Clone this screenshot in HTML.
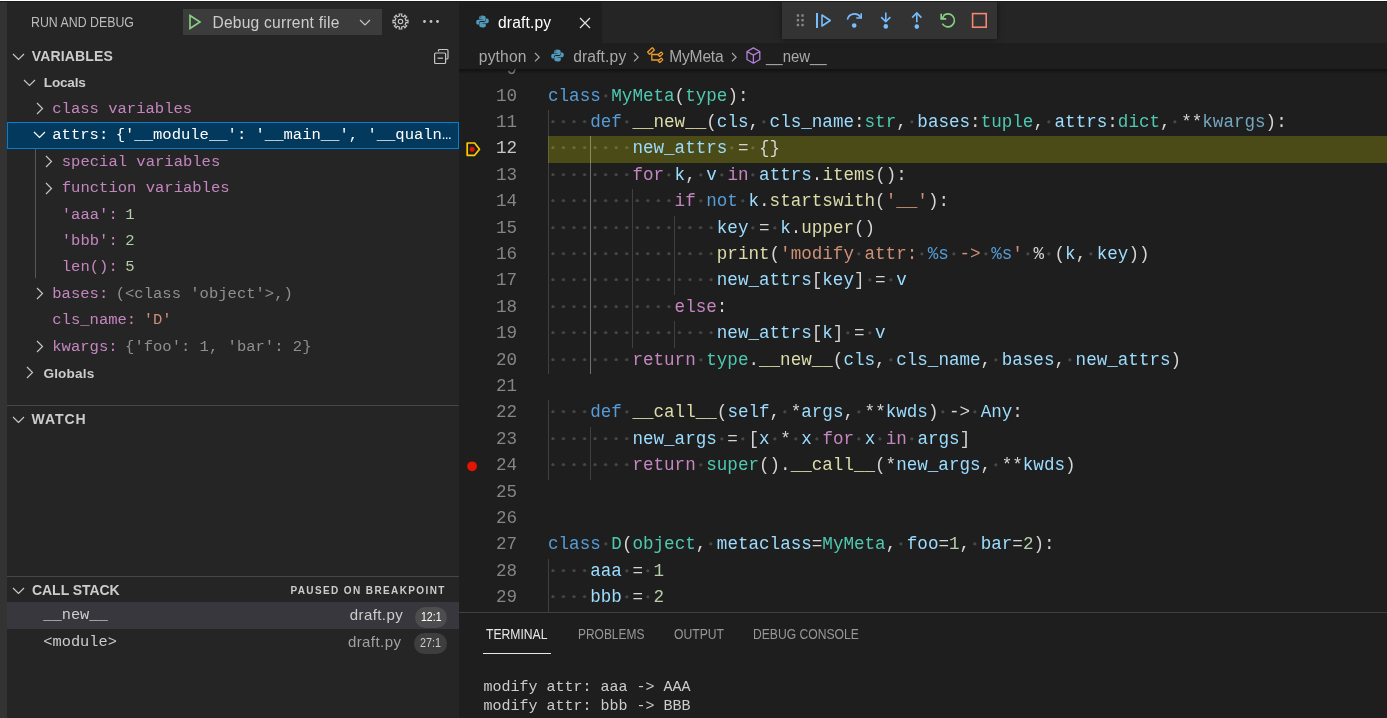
<!DOCTYPE html>
<html><head><meta charset="utf-8"><style>
html,body{margin:0;padding:0;}
body{width:1387px;height:718px;overflow:hidden;position:relative;background:#1e1e1e;font-family:"Liberation Sans", sans-serif;}
.t{position:absolute;white-space:pre;}
.r{position:absolute;}
.ln{position:absolute;left:0;width:58px;text-align:right;height:26.4px;line-height:26.4px;font-family:"Liberation Mono", monospace;font-size:17.58px;}
.cl{position:absolute;left:89px;height:26.4px;line-height:26.4px;font-family:"Liberation Mono", monospace;font-size:17.58px;white-space:pre;color:#d4d4d4;}
.ws{color:rgba(227,228,226,0.22);}
</style></head><body><div id="w" style="position:absolute;left:0;top:0;width:1387px;height:718px;will-change:transform;">
<div class="r" style="left:0px;top:0px;width:1387px;height:718px;background:#1e1e1e;"></div>
<div class="r" style="left:0px;top:0px;width:7px;height:718px;background:#333333;"></div>
<div class="r" style="left:7px;top:0px;width:452px;height:718px;background:#252526;"></div>
<div class="t" style="left:31.00px;top:16.00px;font-size:13.8px;line-height:13.8px;color:#bbbbbb;font-family:'Liberation Sans', sans-serif;font-weight:400;letter-spacing:0.000px;transform:scaleX(0.8955);transform-origin:0 0;">RUN AND DEBUG</div>
<div class="r" style="left:183px;top:9px;width:199px;height:26px;background:#3c3c3c;"></div>
<svg class="r" style="left:188px;top:14px;" width="14" height="16" viewBox="0 0 14 16"><path d="M2 1.5 L12 8 L2 14.5 Z" fill="none" stroke="#89d185" stroke-width="1.6" stroke-linejoin="miter"/></svg>
<div class="t" style="left:212.40px;top:15.00px;font-size:15.6px;line-height:15.6px;color:#cccccc;font-family:'Liberation Sans', sans-serif;font-weight:400;letter-spacing:0.228px;">Debug current file</div>
<svg class="r" style="left:359.3px;top:18.5px;" width="12" height="7" viewBox="0 0 12 7"><path d="M1 1 L6 6 L11 1" fill="none" stroke="#c5c5c5" stroke-width="1.2"/></svg>
<svg class="r" style="left:391.5px;top:12.7px;" width="17" height="17" viewBox="0 0 17 17"><g transform="translate(8.5,8.5)" fill="none" stroke="#c5c5c5" stroke-width="1.2"><path d="M7.48 -1.32 L7.48 1.32 L5.51 1.02 L4.62 3.17 L6.23 4.36 L4.36 6.23 L3.17 4.62 L1.02 5.51 L1.32 7.48 L-1.32 7.48 L-1.02 5.51 L-3.17 4.62 L-4.36 6.23 L-6.23 4.36 L-4.62 3.17 L-5.51 1.02 L-7.48 1.32 L-7.48 -1.32 L-5.51 -1.02 L-4.62 -3.17 L-6.23 -4.36 L-4.36 -6.23 L-3.17 -4.62 L-1.02 -5.51 L-1.32 -7.48 L1.32 -7.48 L1.02 -5.51 L3.17 -4.62 L4.36 -6.23 L6.23 -4.36 L4.62 -3.17 L5.51 -1.02 Z"/><circle r="2.2"/></g></svg>
<svg class="r" style="left:422px;top:19px;" width="18" height="5" viewBox="0 0 18 5"><circle cx="2.5" cy="2.5" r="1.4" fill="#c5c5c5"/><circle cx="9" cy="2.5" r="1.4" fill="#c5c5c5"/><circle cx="15.5" cy="2.5" r="1.4" fill="#c5c5c5"/></svg>
<svg class="r" style="left:12.0px;top:53.25px;" width="13.0" height="7.5" viewBox="0 0 13.0 7.5"><path d="M1 1 L6.5 6.5 L12.0 1" fill="none" stroke="#c5c5c5" stroke-width="1.2"/></svg>
<div class="t" style="left:31.80px;top:49.00px;font-size:14px;line-height:14px;color:#cccccc;font-family:'Liberation Sans', sans-serif;font-weight:700;letter-spacing:0.143px;">VARIABLES</div>
<svg class="r" style="left:433px;top:48px;" width="17" height="17" viewBox="0 0 17 17"><g fill="none" stroke="#c5c5c5" stroke-width="1.2"><path d="M5.5 3.5 V2.5 Q5.5 1.5 6.5 1.5 H14 Q15 1.5 15 2.5 V10 Q15 11 14 11 H13"/><rect x="1.6" y="5" width="11" height="10.5" rx="1"/><path d="M4.5 10.2 H10"/></g></svg>
<svg class="r" style="left:23.0px;top:79.25px;" width="13.0" height="7.5" viewBox="0 0 13.0 7.5"><path d="M1 1 L6.5 6.5 L12.0 1" fill="none" stroke="#c5c5c5" stroke-width="1.2"/></svg>
<div class="t" style="left:43.80px;top:76.00px;font-size:13.6px;line-height:13.6px;color:#cccccc;font-family:'Liberation Sans', sans-serif;font-weight:700;letter-spacing:-0.216px;">Locals</div>
<svg class="r" style="left:36.25px;top:102.0px;" width="7.5" height="13.0" viewBox="0 0 7.5 13.0"><path d="M1 1 L6.5 6.5 L1 12.0" fill="none" stroke="#c5c5c5" stroke-width="1.2"/></svg>
<div class="t" style="left:52.30px;top:102.00px;font-size:15.54px;line-height:15.54px;color:#c586c0;font-family:'Liberation Mono', monospace;font-weight:400;letter-spacing:0.000px;">class variables</div>
<div class="r" style="left:7px;top:122px;width:452px;height:27px;background:#04395e;box-sizing:border-box;border:1px solid #007fd4;"></div>
<svg class="r" style="left:33.0px;top:131.25px;" width="13.0" height="7.5" viewBox="0 0 13.0 7.5"><path d="M1 1 L6.5 6.5 L12.0 1" fill="none" stroke="#ffffff" stroke-width="1.2"/></svg>
<div class="t" style="left:52.30px;top:128.00px;font-size:15.54px;line-height:15.54px;color:#ffffff;font-family:'Liberation Mono', monospace;font-weight:400;letter-spacing:0.000px;">attrs:</div>
<div class="t" style="left:115.74px;top:128.00px;font-size:15.54px;line-height:15.54px;color:#ffffff;font-family:'Liberation Mono', monospace;font-weight:400;letter-spacing:0.000px;">{'__module__': '__main__', '__qualn…</div>
<div class="r" style="left:35px;top:149px;width:1px;height:129px;background:#585858;"></div>
<svg class="r" style="left:45.25px;top:154.5px;" width="7.5" height="13.0" viewBox="0 0 7.5 13.0"><path d="M1 1 L6.5 6.5 L1 12.0" fill="none" stroke="#c5c5c5" stroke-width="1.2"/></svg>
<div class="t" style="left:61.80px;top:155.00px;font-size:15.54px;line-height:15.54px;color:#c586c0;font-family:'Liberation Mono', monospace;font-weight:400;letter-spacing:0.000px;">special variables</div>
<svg class="r" style="left:45.25px;top:181.9px;" width="7.5" height="13.0" viewBox="0 0 7.5 13.0"><path d="M1 1 L6.5 6.5 L1 12.0" fill="none" stroke="#c5c5c5" stroke-width="1.2"/></svg>
<div class="t" style="left:61.80px;top:181.00px;font-size:15.54px;line-height:15.54px;color:#c586c0;font-family:'Liberation Mono', monospace;font-weight:400;letter-spacing:0.000px;">function variables</div>
<div class="t" style="left:61.80px;top:208.00px;font-size:15.54px;line-height:15.54px;color:#c586c0;font-family:'Liberation Mono', monospace;font-weight:400;letter-spacing:0.000px;">'aaa':</div>
<div class="t" style="left:125.24px;top:208.00px;font-size:15.54px;line-height:15.54px;color:#b5cea8;font-family:'Liberation Mono', monospace;font-weight:400;letter-spacing:0.000px;">1</div>
<div class="t" style="left:61.80px;top:234.00px;font-size:15.54px;line-height:15.54px;color:#c586c0;font-family:'Liberation Mono', monospace;font-weight:400;letter-spacing:0.000px;">'bbb':</div>
<div class="t" style="left:125.24px;top:234.00px;font-size:15.54px;line-height:15.54px;color:#b5cea8;font-family:'Liberation Mono', monospace;font-weight:400;letter-spacing:0.000px;">2</div>
<div class="t" style="left:61.80px;top:260.00px;font-size:15.54px;line-height:15.54px;color:#c586c0;font-family:'Liberation Mono', monospace;font-weight:400;letter-spacing:0.000px;">len():</div>
<div class="t" style="left:125.24px;top:260.00px;font-size:15.54px;line-height:15.54px;color:#b5cea8;font-family:'Liberation Mono', monospace;font-weight:400;letter-spacing:0.000px;">5</div>
<svg class="r" style="left:36.25px;top:286.5px;" width="7.5" height="13.0" viewBox="0 0 7.5 13.0"><path d="M1 1 L6.5 6.5 L1 12.0" fill="none" stroke="#c5c5c5" stroke-width="1.2"/></svg>
<div class="t" style="left:52.30px;top:287.00px;font-size:15.54px;line-height:15.54px;color:#c586c0;font-family:'Liberation Mono', monospace;font-weight:400;letter-spacing:0.000px;">bases:</div>
<div class="t" style="left:115.74px;top:287.00px;font-size:15.54px;line-height:15.54px;color:#8f8f90;font-family:'Liberation Mono', monospace;font-weight:400;letter-spacing:0.000px;">(&lt;class 'object'&gt;,)</div>
<div class="t" style="left:52.30px;top:313.00px;font-size:15.54px;line-height:15.54px;color:#c586c0;font-family:'Liberation Mono', monospace;font-weight:400;letter-spacing:0.000px;">cls_name:</div>
<div class="t" style="left:143.72px;top:313.00px;font-size:15.54px;line-height:15.54px;color:#ce9178;font-family:'Liberation Mono', monospace;font-weight:400;letter-spacing:0.000px;">'D'</div>
<svg class="r" style="left:36.25px;top:339.5px;" width="7.5" height="13.0" viewBox="0 0 7.5 13.0"><path d="M1 1 L6.5 6.5 L1 12.0" fill="none" stroke="#c5c5c5" stroke-width="1.2"/></svg>
<div class="t" style="left:52.30px;top:340.00px;font-size:15.54px;line-height:15.54px;color:#c586c0;font-family:'Liberation Mono', monospace;font-weight:400;letter-spacing:0.000px;">kwargs:</div>
<div class="t" style="left:125.07px;top:340.00px;font-size:15.54px;line-height:15.54px;color:#8f8f90;font-family:'Liberation Mono', monospace;font-weight:400;letter-spacing:0.000px;">{'foo': 1, 'bar': 2}</div>
<svg class="r" style="left:26.25px;top:365.5px;" width="7.5" height="13.0" viewBox="0 0 7.5 13.0"><path d="M1 1 L6.5 6.5 L1 12.0" fill="none" stroke="#c5c5c5" stroke-width="1.2"/></svg>
<div class="t" style="left:43.40px;top:367.00px;font-size:13.6px;line-height:13.6px;color:#cccccc;font-family:'Liberation Sans', sans-serif;font-weight:700;letter-spacing:0.188px;">Globals</div>
<div class="r" style="left:7px;top:405px;width:452px;height:1px;background:#464646;"></div>
<svg class="r" style="left:12.0px;top:415.75px;" width="13.0" height="7.5" viewBox="0 0 13.0 7.5"><path d="M1 1 L6.5 6.5 L12.0 1" fill="none" stroke="#c5c5c5" stroke-width="1.2"/></svg>
<div class="t" style="left:31.60px;top:412.00px;font-size:14px;line-height:14px;color:#cccccc;font-family:'Liberation Sans', sans-serif;font-weight:700;letter-spacing:0.928px;">WATCH</div>
<div class="r" style="left:7px;top:576px;width:452px;height:1px;background:#464646;"></div>
<svg class="r" style="left:12.0px;top:586.75px;" width="13.0" height="7.5" viewBox="0 0 13.0 7.5"><path d="M1 1 L6.5 6.5 L12.0 1" fill="none" stroke="#c5c5c5" stroke-width="1.2"/></svg>
<div class="t" style="left:32.00px;top:583.00px;font-size:14px;line-height:14px;color:#cccccc;font-family:'Liberation Sans', sans-serif;font-weight:700;letter-spacing:-0.049px;">CALL STACK</div>
<div class="t" style="left:290.40px;top:586.00px;font-size:10.0px;line-height:10.0px;color:#cccccc;font-family:'Liberation Sans', sans-serif;font-weight:700;letter-spacing:1.389px;">PAUSED ON BREAKPOINT</div>
<div class="r" style="left:7px;top:602px;width:452px;height:27px;background:#37373d;"></div>
<div class="t" style="left:43.30px;top:608.00px;font-size:15.33px;line-height:15.33px;color:#cccccc;font-family:'Liberation Mono', monospace;font-weight:400;letter-spacing:0.000px;">__new__</div>
<div class="t" style="left:349.70px;top:607.00px;font-size:15.0px;line-height:15.0px;color:#cccccc;font-family:'Liberation Sans', sans-serif;font-weight:400;letter-spacing:0.426px;">draft.py</div>
<div class="r" style="left:415px;top:607px;width:32px;height:21px;background:#4d4d4d;border-radius:11px;"></div>
<div class="t" style="left:420.50px;top:610.00px;font-size:13px;line-height:13px;color:#ffffff;font-family:'Liberation Sans', sans-serif;font-weight:400;letter-spacing:0.000px;transform:scaleX(0.8103);transform-origin:0 0;">12:1</div>
<div class="t" style="left:43.30px;top:635.00px;font-size:15.33px;line-height:15.33px;color:#cccccc;font-family:'Liberation Mono', monospace;font-weight:400;letter-spacing:0.000px;">&lt;module&gt;</div>
<div class="t" style="left:347.90px;top:634.00px;font-size:15.0px;line-height:15.0px;color:#a0a0a0;font-family:'Liberation Sans', sans-serif;font-weight:400;letter-spacing:0.426px;">draft.py</div>
<div class="r" style="left:414px;top:633px;width:33px;height:21px;background:#3e3e3e;border-radius:11px;"></div>
<div class="t" style="left:419.50px;top:636.00px;font-size:13px;line-height:13px;color:#cccccc;font-family:'Liberation Sans', sans-serif;font-weight:400;letter-spacing:0.000px;transform:scaleX(0.8301);transform-origin:0 0;">27:1</div>
<div class="r" style="left:459px;top:0px;width:928px;height:43px;background:#252526;"></div>
<div class="r" style="left:459px;top:2px;width:143px;height:41px;background:#1e1e1e;"></div>
<svg class="r" style="left:475.8px;top:15px;" width="13" height="13" viewBox="0 0 13 13"><g transform="scale(1.0)"><path d="M6.4 0.5 C4.2 0.5 3.2 1.3 3.2 2.6 V4.2 H6.6 V4.8 H1.9 C0.7 4.8 0.2 5.9 0.2 7.2 C0.2 8.6 0.8 9.6 1.9 9.6 H3 V8 C3 6.9 3.9 6.1 5 6.1 H8 C8.9 6.1 9.7 5.4 9.7 4.5 V2.5 C9.7 1.3 8.6 0.5 6.4 0.5 Z M4.8 1.5 A0.55 0.55 0 1 1 4.79 1.5 Z" fill="#519aba"/><path d="M6.6 12.5 C8.8 12.5 9.8 11.7 9.8 10.4 V8.8 H6.4 V8.2 H11.1 C12.3 8.2 12.8 7.1 12.8 5.8 C12.8 4.4 12.2 3.4 11.1 3.4 H10 V5 C10 6.1 9.1 6.9 8 6.9 H5 C4.1 6.9 3.3 7.6 3.3 8.5 V10.5 C3.3 11.7 4.4 12.5 6.6 12.5 Z" fill="#519aba"/></g></svg>
<div class="t" style="left:498.00px;top:15.00px;font-size:15.6px;line-height:15.6px;color:#ffffff;font-family:'Liberation Sans', sans-serif;font-weight:400;letter-spacing:0.140px;">draft.py</div>
<svg class="r" style="left:579px;top:16.5px;" width="12" height="12" viewBox="0 0 12 12"><path d="M1 1 L11 11 M11 1 L1 11" stroke="#e0e0e0" stroke-width="1.3"/></svg>
<div class="r" style="left:459px;top:43px;width:928px;height:26px;background:#1e1e1e;"></div>
<div class="t" style="left:478.80px;top:49.00px;font-size:15.6px;line-height:15.6px;color:#a9a9a9;font-family:'Liberation Sans', sans-serif;font-weight:400;letter-spacing:0.173px;">python</div>
<svg class="r" style="left:534.1px;top:52.3px;" width="6.2" height="10.4" viewBox="0 0 6.2 10.4"><path d="M1 1 L5.2 5.2 L1 9.4" fill="none" stroke="#a9a9a9" stroke-width="1.2"/></svg>
<svg class="r" style="left:550.8px;top:49px;" width="13" height="13" viewBox="0 0 13 13"><g transform="scale(1.0)"><path d="M6.4 0.5 C4.2 0.5 3.2 1.3 3.2 2.6 V4.2 H6.6 V4.8 H1.9 C0.7 4.8 0.2 5.9 0.2 7.2 C0.2 8.6 0.8 9.6 1.9 9.6 H3 V8 C3 6.9 3.9 6.1 5 6.1 H8 C8.9 6.1 9.7 5.4 9.7 4.5 V2.5 C9.7 1.3 8.6 0.5 6.4 0.5 Z M4.8 1.5 A0.55 0.55 0 1 1 4.79 1.5 Z" fill="#519aba"/><path d="M6.6 12.5 C8.8 12.5 9.8 11.7 9.8 10.4 V8.8 H6.4 V8.2 H11.1 C12.3 8.2 12.8 7.1 12.8 5.8 C12.8 4.4 12.2 3.4 11.1 3.4 H10 V5 C10 6.1 9.1 6.9 8 6.9 H5 C4.1 6.9 3.3 7.6 3.3 8.5 V10.5 C3.3 11.7 4.4 12.5 6.6 12.5 Z" fill="#519aba"/></g></svg>
<div class="t" style="left:573.20px;top:49.00px;font-size:15.6px;line-height:15.6px;color:#a9a9a9;font-family:'Liberation Sans', sans-serif;font-weight:400;letter-spacing:0.140px;">draft.py</div>
<svg class="r" style="left:633.3px;top:52.3px;" width="6.2" height="10.4" viewBox="0 0 6.2 10.4"><path d="M1 1 L5.2 5.2 L1 9.4" fill="none" stroke="#a9a9a9" stroke-width="1.2"/></svg>
<svg class="r" style="left:646px;top:47px;" width="18" height="18" viewBox="0 0 18 18"><g fill="none" stroke="#ee9d28" stroke-width="1.3"><rect x="1.75" y="2.4" width="6.5" height="3.2" rx="0.5" transform="rotate(-42 5 4)"/><rect x="12.4" y="6.1" width="4.2" height="2.4" rx="0.5" transform="rotate(-42 14.5 7.3)"/><rect x="12.4" y="12.1" width="4.2" height="2.4" rx="0.5" transform="rotate(-42 14.5 13.3)"/><path d="M5.8 6.6 V13 H12.8 M5.8 7.5 H12.8"/></g></svg>
<div class="t" style="left:669.20px;top:49.00px;font-size:15.6px;line-height:15.6px;color:#a9a9a9;font-family:'Liberation Sans', sans-serif;font-weight:400;letter-spacing:-0.195px;">MyMeta</div>
<svg class="r" style="left:731.3px;top:52.3px;" width="6.2" height="10.4" viewBox="0 0 6.2 10.4"><path d="M1 1 L5.2 5.2 L1 9.4" fill="none" stroke="#a9a9a9" stroke-width="1.2"/></svg>
<svg class="r" style="left:745px;top:46.5px;" width="17" height="18" viewBox="0 0 17 18"><g fill="none" stroke="#b180d7" stroke-width="1.3" stroke-linejoin="round"><path d="M8.4 0.9 L14.8 4.5 V12.5 L8.4 16.2 L2 12.5 V4.5 Z M2 4.5 L8.4 8.1 L14.8 4.5 M8.4 8.1 V16.2"/></g></svg>
<div class="t" style="left:766.00px;top:49.00px;font-size:15.6px;line-height:15.6px;color:#a9a9a9;font-family:'Liberation Sans', sans-serif;font-weight:400;letter-spacing:0.000px;transform:scaleX(0.9587);transform-origin:0 0;">__new__</div>
<div class="r" style="left:782px;top:2px;width:215px;height:37px;background:#333333;box-shadow:0 0 6px rgba(0,0,0,0.55);"></div>
<svg class="r" style="left:796px;top:14px;" width="10" height="14" viewBox="0 0 10 14"><rect x="0.8" y="0.3" width="2.3" height="2.4" fill="#8a8a8a"/><rect x="0.8" y="5.0" width="2.3" height="2.4" fill="#8a8a8a"/><rect x="0.8" y="9.8" width="2.3" height="2.4" fill="#8a8a8a"/><rect x="5.4" y="0.3" width="2.3" height="2.4" fill="#8a8a8a"/><rect x="5.4" y="5.0" width="2.3" height="2.4" fill="#8a8a8a"/><rect x="5.4" y="9.8" width="2.3" height="2.4" fill="#8a8a8a"/></svg>
<svg class="r" style="left:814px;top:11px;" width="20" height="19" viewBox="0 0 20 19"><path d="M3 2 V17" stroke="#75beff" stroke-width="2"/><path d="M8 4 L16.2 9.5 L8 15 Z" fill="none" stroke="#75beff" stroke-width="1.6" stroke-linejoin="round"/></svg>
<svg class="r" style="left:845px;top:11px;" width="19" height="18" viewBox="0 0 19 18"><path d="M2.5 8.7 A7 6.5 0 0 1 15.5 6.2" fill="none" stroke="#75beff" stroke-width="1.6"/><path d="M16.2 2.2 V7 H11.3" fill="none" stroke="#75beff" stroke-width="1.6"/><circle cx="9.2" cy="14.5" r="2.3" fill="#75beff"/></svg>
<svg class="r" style="left:878px;top:10px;" width="16" height="20" viewBox="0 0 16 20"><path d="M7.8 2.5 V11.6" stroke="#75beff" stroke-width="1.6"/><path d="M3.2 7.2 L7.8 11.6 L12.4 7.2" fill="none" stroke="#75beff" stroke-width="1.6"/><circle cx="7.8" cy="16.4" r="2.3" fill="#75beff"/></svg>
<svg class="r" style="left:909px;top:10px;" width="16" height="20" viewBox="0 0 16 20"><path d="M7.8 3.1 V12.3" stroke="#75beff" stroke-width="1.6"/><path d="M3.2 7.6 L7.8 3 L12.4 7.6" fill="none" stroke="#75beff" stroke-width="1.6"/><circle cx="7.8" cy="16.6" r="2.3" fill="#75beff"/></svg>
<svg class="r" style="left:938px;top:11px;" width="19" height="19" viewBox="0 0 19 19"><path d="M4.3 12.7 A6.5 6.5 0 1 0 5.4 4.7" fill="none" stroke="#89d185" stroke-width="1.6"/><path d="M3.2 2.8 V7.9 H8.2 M3.6 7.5 L6 5.1" fill="none" stroke="#89d185" stroke-width="1.7"/></svg>
<svg class="r" style="left:970px;top:11px;" width="19" height="19" viewBox="0 0 19 19"><rect x="2.6" y="2.6" width="13.6" height="13.6" fill="none" stroke="#f48771" stroke-width="1.6"/></svg>
<div class="r" style="left:459px;top:69px;width:928px;height:543px;overflow:hidden;">
<div class="r" style="left:89px;top:41.0px;width:1px;height:264.0px;background:#404040;"></div>
<div class="r" style="left:131px;top:67.39999999999998px;width:1px;height:237.6px;background:#707070;"></div>
<div class="r" style="left:173px;top:120.19999999999999px;width:1px;height:158.39999999999998px;background:#404040;"></div>
<div class="r" style="left:215px;top:146.6px;width:1px;height:79.19999999999999px;background:#404040;"></div>
<div class="r" style="left:215px;top:252.2px;width:1px;height:26.4px;background:#404040;"></div>
<div class="r" style="left:89px;top:331.4px;width:1px;height:79.19999999999999px;background:#404040;"></div>
<div class="r" style="left:131px;top:357.79999999999995px;width:1px;height:52.8px;background:#404040;"></div>
<div class="r" style="left:89px;top:489.79999999999995px;width:1px;height:52.8px;background:#404040;"></div>
<div class="r" style="left:141.75px;top:14.60px;width:10.55px;height:26.4px;background:radial-gradient(circle at 4.875px 11.9px, #474747 1.2px, transparent 1.9px) 0 0/10.55px 26.4px repeat-x;"></div>
<div class="r" style="left:89.00px;top:41.00px;width:42.20px;height:26.4px;background:radial-gradient(circle at 4.875px 11.9px, #474747 1.2px, transparent 1.9px) 0 0/10.55px 26.4px repeat-x;"></div>
<div class="r" style="left:162.85px;top:41.00px;width:10.55px;height:26.4px;background:radial-gradient(circle at 4.875px 11.9px, #474747 1.2px, transparent 1.9px) 0 0/10.55px 26.4px repeat-x;"></div>
<div class="r" style="left:300.00px;top:41.00px;width:10.55px;height:26.4px;background:radial-gradient(circle at 4.875px 11.9px, #474747 1.2px, transparent 1.9px) 0 0/10.55px 26.4px repeat-x;"></div>
<div class="r" style="left:447.70px;top:41.00px;width:10.55px;height:26.4px;background:radial-gradient(circle at 4.875px 11.9px, #474747 1.2px, transparent 1.9px) 0 0/10.55px 26.4px repeat-x;"></div>
<div class="r" style="left:584.85px;top:41.00px;width:10.55px;height:26.4px;background:radial-gradient(circle at 4.875px 11.9px, #474747 1.2px, transparent 1.9px) 0 0/10.55px 26.4px repeat-x;"></div>
<div class="r" style="left:711.45px;top:41.00px;width:10.55px;height:26.4px;background:radial-gradient(circle at 4.875px 11.9px, #474747 1.2px, transparent 1.9px) 0 0/10.55px 26.4px repeat-x;"></div>
<div class="r" style="left:89.00px;top:67.40px;width:84.40px;height:26.4px;background:radial-gradient(circle at 4.875px 11.9px, #474747 1.2px, transparent 1.9px) 0 0/10.55px 26.4px repeat-x;"></div>
<div class="r" style="left:268.35px;top:67.40px;width:10.55px;height:26.4px;background:radial-gradient(circle at 4.875px 11.9px, #474747 1.2px, transparent 1.9px) 0 0/10.55px 26.4px repeat-x;"></div>
<div class="r" style="left:289.45px;top:67.40px;width:10.55px;height:26.4px;background:radial-gradient(circle at 4.875px 11.9px, #474747 1.2px, transparent 1.9px) 0 0/10.55px 26.4px repeat-x;"></div>
<div class="r" style="left:89.00px;top:93.80px;width:84.40px;height:26.4px;background:radial-gradient(circle at 4.875px 11.9px, #474747 1.2px, transparent 1.9px) 0 0/10.55px 26.4px repeat-x;"></div>
<div class="r" style="left:205.05px;top:93.80px;width:10.55px;height:26.4px;background:radial-gradient(circle at 4.875px 11.9px, #474747 1.2px, transparent 1.9px) 0 0/10.55px 26.4px repeat-x;"></div>
<div class="r" style="left:236.70px;top:93.80px;width:10.55px;height:26.4px;background:radial-gradient(circle at 4.875px 11.9px, #474747 1.2px, transparent 1.9px) 0 0/10.55px 26.4px repeat-x;"></div>
<div class="r" style="left:257.80px;top:93.80px;width:10.55px;height:26.4px;background:radial-gradient(circle at 4.875px 11.9px, #474747 1.2px, transparent 1.9px) 0 0/10.55px 26.4px repeat-x;"></div>
<div class="r" style="left:289.45px;top:93.80px;width:10.55px;height:26.4px;background:radial-gradient(circle at 4.875px 11.9px, #474747 1.2px, transparent 1.9px) 0 0/10.55px 26.4px repeat-x;"></div>
<div class="r" style="left:89.00px;top:120.20px;width:126.60px;height:26.4px;background:radial-gradient(circle at 4.875px 11.9px, #474747 1.2px, transparent 1.9px) 0 0/10.55px 26.4px repeat-x;"></div>
<div class="r" style="left:236.70px;top:120.20px;width:10.55px;height:26.4px;background:radial-gradient(circle at 4.875px 11.9px, #474747 1.2px, transparent 1.9px) 0 0/10.55px 26.4px repeat-x;"></div>
<div class="r" style="left:278.90px;top:120.20px;width:10.55px;height:26.4px;background:radial-gradient(circle at 4.875px 11.9px, #474747 1.2px, transparent 1.9px) 0 0/10.55px 26.4px repeat-x;"></div>
<div class="r" style="left:89.00px;top:146.60px;width:168.80px;height:26.4px;background:radial-gradient(circle at 4.875px 11.9px, #474747 1.2px, transparent 1.9px) 0 0/10.55px 26.4px repeat-x;"></div>
<div class="r" style="left:289.45px;top:146.60px;width:10.55px;height:26.4px;background:radial-gradient(circle at 4.875px 11.9px, #474747 1.2px, transparent 1.9px) 0 0/10.55px 26.4px repeat-x;"></div>
<div class="r" style="left:310.55px;top:146.60px;width:10.55px;height:26.4px;background:radial-gradient(circle at 4.875px 11.9px, #474747 1.2px, transparent 1.9px) 0 0/10.55px 26.4px repeat-x;"></div>
<div class="r" style="left:89.00px;top:173.00px;width:168.80px;height:26.4px;background:radial-gradient(circle at 4.875px 11.9px, #474747 1.2px, transparent 1.9px) 0 0/10.55px 26.4px repeat-x;"></div>
<div class="r" style="left:394.95px;top:173.00px;width:10.55px;height:26.4px;background:radial-gradient(circle at 4.875px 11.9px, #474747 1.2px, transparent 1.9px) 0 0/10.55px 26.4px repeat-x;"></div>
<div class="r" style="left:458.25px;top:173.00px;width:10.55px;height:26.4px;background:radial-gradient(circle at 4.875px 11.9px, #474747 1.2px, transparent 1.9px) 0 0/10.55px 26.4px repeat-x;"></div>
<div class="r" style="left:489.90px;top:173.00px;width:10.55px;height:26.4px;background:radial-gradient(circle at 4.875px 11.9px, #474747 1.2px, transparent 1.9px) 0 0/10.55px 26.4px repeat-x;"></div>
<div class="r" style="left:521.55px;top:173.00px;width:10.55px;height:26.4px;background:radial-gradient(circle at 4.875px 11.9px, #474747 1.2px, transparent 1.9px) 0 0/10.55px 26.4px repeat-x;"></div>
<div class="r" style="left:563.75px;top:173.00px;width:10.55px;height:26.4px;background:radial-gradient(circle at 4.875px 11.9px, #474747 1.2px, transparent 1.9px) 0 0/10.55px 26.4px repeat-x;"></div>
<div class="r" style="left:584.85px;top:173.00px;width:10.55px;height:26.4px;background:radial-gradient(circle at 4.875px 11.9px, #474747 1.2px, transparent 1.9px) 0 0/10.55px 26.4px repeat-x;"></div>
<div class="r" style="left:627.05px;top:173.00px;width:10.55px;height:26.4px;background:radial-gradient(circle at 4.875px 11.9px, #474747 1.2px, transparent 1.9px) 0 0/10.55px 26.4px repeat-x;"></div>
<div class="r" style="left:89.00px;top:199.40px;width:168.80px;height:26.4px;background:radial-gradient(circle at 4.875px 11.9px, #474747 1.2px, transparent 1.9px) 0 0/10.55px 26.4px repeat-x;"></div>
<div class="r" style="left:405.50px;top:199.40px;width:10.55px;height:26.4px;background:radial-gradient(circle at 4.875px 11.9px, #474747 1.2px, transparent 1.9px) 0 0/10.55px 26.4px repeat-x;"></div>
<div class="r" style="left:426.60px;top:199.40px;width:10.55px;height:26.4px;background:radial-gradient(circle at 4.875px 11.9px, #474747 1.2px, transparent 1.9px) 0 0/10.55px 26.4px repeat-x;"></div>
<div class="r" style="left:89.00px;top:225.80px;width:126.60px;height:26.4px;background:radial-gradient(circle at 4.875px 11.9px, #474747 1.2px, transparent 1.9px) 0 0/10.55px 26.4px repeat-x;"></div>
<div class="r" style="left:89.00px;top:252.20px;width:168.80px;height:26.4px;background:radial-gradient(circle at 4.875px 11.9px, #474747 1.2px, transparent 1.9px) 0 0/10.55px 26.4px repeat-x;"></div>
<div class="r" style="left:384.40px;top:252.20px;width:10.55px;height:26.4px;background:radial-gradient(circle at 4.875px 11.9px, #474747 1.2px, transparent 1.9px) 0 0/10.55px 26.4px repeat-x;"></div>
<div class="r" style="left:405.50px;top:252.20px;width:10.55px;height:26.4px;background:radial-gradient(circle at 4.875px 11.9px, #474747 1.2px, transparent 1.9px) 0 0/10.55px 26.4px repeat-x;"></div>
<div class="r" style="left:89.00px;top:278.60px;width:84.40px;height:26.4px;background:radial-gradient(circle at 4.875px 11.9px, #474747 1.2px, transparent 1.9px) 0 0/10.55px 26.4px repeat-x;"></div>
<div class="r" style="left:236.70px;top:278.60px;width:10.55px;height:26.4px;background:radial-gradient(circle at 4.875px 11.9px, #474747 1.2px, transparent 1.9px) 0 0/10.55px 26.4px repeat-x;"></div>
<div class="r" style="left:426.60px;top:278.60px;width:10.55px;height:26.4px;background:radial-gradient(circle at 4.875px 11.9px, #474747 1.2px, transparent 1.9px) 0 0/10.55px 26.4px repeat-x;"></div>
<div class="r" style="left:532.10px;top:278.60px;width:10.55px;height:26.4px;background:radial-gradient(circle at 4.875px 11.9px, #474747 1.2px, transparent 1.9px) 0 0/10.55px 26.4px repeat-x;"></div>
<div class="r" style="left:605.95px;top:278.60px;width:10.55px;height:26.4px;background:radial-gradient(circle at 4.875px 11.9px, #474747 1.2px, transparent 1.9px) 0 0/10.55px 26.4px repeat-x;"></div>
<div class="r" style="left:89.00px;top:331.40px;width:42.20px;height:26.4px;background:radial-gradient(circle at 4.875px 11.9px, #474747 1.2px, transparent 1.9px) 0 0/10.55px 26.4px repeat-x;"></div>
<div class="r" style="left:162.85px;top:331.40px;width:10.55px;height:26.4px;background:radial-gradient(circle at 4.875px 11.9px, #474747 1.2px, transparent 1.9px) 0 0/10.55px 26.4px repeat-x;"></div>
<div class="r" style="left:321.10px;top:331.40px;width:10.55px;height:26.4px;background:radial-gradient(circle at 4.875px 11.9px, #474747 1.2px, transparent 1.9px) 0 0/10.55px 26.4px repeat-x;"></div>
<div class="r" style="left:394.95px;top:331.40px;width:10.55px;height:26.4px;background:radial-gradient(circle at 4.875px 11.9px, #474747 1.2px, transparent 1.9px) 0 0/10.55px 26.4px repeat-x;"></div>
<div class="r" style="left:479.35px;top:331.40px;width:10.55px;height:26.4px;background:radial-gradient(circle at 4.875px 11.9px, #474747 1.2px, transparent 1.9px) 0 0/10.55px 26.4px repeat-x;"></div>
<div class="r" style="left:511.00px;top:331.40px;width:10.55px;height:26.4px;background:radial-gradient(circle at 4.875px 11.9px, #474747 1.2px, transparent 1.9px) 0 0/10.55px 26.4px repeat-x;"></div>
<div class="r" style="left:89.00px;top:357.80px;width:84.40px;height:26.4px;background:radial-gradient(circle at 4.875px 11.9px, #474747 1.2px, transparent 1.9px) 0 0/10.55px 26.4px repeat-x;"></div>
<div class="r" style="left:257.80px;top:357.80px;width:10.55px;height:26.4px;background:radial-gradient(circle at 4.875px 11.9px, #474747 1.2px, transparent 1.9px) 0 0/10.55px 26.4px repeat-x;"></div>
<div class="r" style="left:278.90px;top:357.80px;width:10.55px;height:26.4px;background:radial-gradient(circle at 4.875px 11.9px, #474747 1.2px, transparent 1.9px) 0 0/10.55px 26.4px repeat-x;"></div>
<div class="r" style="left:310.55px;top:357.80px;width:10.55px;height:26.4px;background:radial-gradient(circle at 4.875px 11.9px, #474747 1.2px, transparent 1.9px) 0 0/10.55px 26.4px repeat-x;"></div>
<div class="r" style="left:331.65px;top:357.80px;width:10.55px;height:26.4px;background:radial-gradient(circle at 4.875px 11.9px, #474747 1.2px, transparent 1.9px) 0 0/10.55px 26.4px repeat-x;"></div>
<div class="r" style="left:352.75px;top:357.80px;width:10.55px;height:26.4px;background:radial-gradient(circle at 4.875px 11.9px, #474747 1.2px, transparent 1.9px) 0 0/10.55px 26.4px repeat-x;"></div>
<div class="r" style="left:394.95px;top:357.80px;width:10.55px;height:26.4px;background:radial-gradient(circle at 4.875px 11.9px, #474747 1.2px, transparent 1.9px) 0 0/10.55px 26.4px repeat-x;"></div>
<div class="r" style="left:416.05px;top:357.80px;width:10.55px;height:26.4px;background:radial-gradient(circle at 4.875px 11.9px, #474747 1.2px, transparent 1.9px) 0 0/10.55px 26.4px repeat-x;"></div>
<div class="r" style="left:447.70px;top:357.80px;width:10.55px;height:26.4px;background:radial-gradient(circle at 4.875px 11.9px, #474747 1.2px, transparent 1.9px) 0 0/10.55px 26.4px repeat-x;"></div>
<div class="r" style="left:89.00px;top:384.20px;width:84.40px;height:26.4px;background:radial-gradient(circle at 4.875px 11.9px, #474747 1.2px, transparent 1.9px) 0 0/10.55px 26.4px repeat-x;"></div>
<div class="r" style="left:236.70px;top:384.20px;width:10.55px;height:26.4px;background:radial-gradient(circle at 4.875px 11.9px, #474747 1.2px, transparent 1.9px) 0 0/10.55px 26.4px repeat-x;"></div>
<div class="r" style="left:532.10px;top:384.20px;width:10.55px;height:26.4px;background:radial-gradient(circle at 4.875px 11.9px, #474747 1.2px, transparent 1.9px) 0 0/10.55px 26.4px repeat-x;"></div>
<div class="r" style="left:141.75px;top:463.40px;width:10.55px;height:26.4px;background:radial-gradient(circle at 4.875px 11.9px, #474747 1.2px, transparent 1.9px) 0 0/10.55px 26.4px repeat-x;"></div>
<div class="r" style="left:247.25px;top:463.40px;width:10.55px;height:26.4px;background:radial-gradient(circle at 4.875px 11.9px, #474747 1.2px, transparent 1.9px) 0 0/10.55px 26.4px repeat-x;"></div>
<div class="r" style="left:437.15px;top:463.40px;width:10.55px;height:26.4px;background:radial-gradient(circle at 4.875px 11.9px, #474747 1.2px, transparent 1.9px) 0 0/10.55px 26.4px repeat-x;"></div>
<div class="r" style="left:511.00px;top:463.40px;width:10.55px;height:26.4px;background:radial-gradient(circle at 4.875px 11.9px, #474747 1.2px, transparent 1.9px) 0 0/10.55px 26.4px repeat-x;"></div>
<div class="r" style="left:89.00px;top:489.80px;width:42.20px;height:26.4px;background:radial-gradient(circle at 4.875px 11.9px, #474747 1.2px, transparent 1.9px) 0 0/10.55px 26.4px repeat-x;"></div>
<div class="r" style="left:162.85px;top:489.80px;width:10.55px;height:26.4px;background:radial-gradient(circle at 4.875px 11.9px, #474747 1.2px, transparent 1.9px) 0 0/10.55px 26.4px repeat-x;"></div>
<div class="r" style="left:183.95px;top:489.80px;width:10.55px;height:26.4px;background:radial-gradient(circle at 4.875px 11.9px, #474747 1.2px, transparent 1.9px) 0 0/10.55px 26.4px repeat-x;"></div>
<div class="r" style="left:89.00px;top:516.20px;width:42.20px;height:26.4px;background:radial-gradient(circle at 4.875px 11.9px, #474747 1.2px, transparent 1.9px) 0 0/10.55px 26.4px repeat-x;"></div>
<div class="r" style="left:162.85px;top:516.20px;width:10.55px;height:26.4px;background:radial-gradient(circle at 4.875px 11.9px, #474747 1.2px, transparent 1.9px) 0 0/10.55px 26.4px repeat-x;"></div>
<div class="r" style="left:183.95px;top:516.20px;width:10.55px;height:26.4px;background:radial-gradient(circle at 4.875px 11.9px, #474747 1.2px, transparent 1.9px) 0 0/10.55px 26.4px repeat-x;"></div>
<div class="r" style="left:89px;top:67.39999999999998px;width:839px;height:26.4px;background:rgba(255,255,0,0.2);"></div>
<div class="ln" style="top:-12.80px;color:#858585">9</div>
<div class="ln" style="top:13.60px;color:#858585">10</div>
<div class="cl" style="top:13.60px"><span style="color:#569cd6">class</span> <span style="color:#4ec9b0">MyMeta</span><span style="color:#d4d4d4">(</span><span style="color:#4ec9b0">type</span><span style="color:#d4d4d4">):</span></div>
<div class="ln" style="top:40.00px;color:#858585">11</div>
<div class="cl" style="top:40.00px">    <span style="color:#569cd6">def</span> <span style="color:#dcdcaa">__new__</span><span style="color:#d4d4d4">(</span><span style="color:#9cdcfe">cls</span><span style="color:#d4d4d4">,</span> <span style="color:#9cdcfe">cls_name</span><span style="color:#d4d4d4">:</span><span style="color:#4ec9b0">str</span><span style="color:#d4d4d4">,</span> <span style="color:#9cdcfe">bases</span><span style="color:#d4d4d4">:</span><span style="color:#4ec9b0">tuple</span><span style="color:#d4d4d4">,</span> <span style="color:#9cdcfe">attrs</span><span style="color:#d4d4d4">:</span><span style="color:#4ec9b0">dict</span><span style="color:#d4d4d4">,</span> <span style="color:#d4d4d4">**</span><span style="color:#74a6c0">kwargs</span><span style="color:#d4d4d4">):</span></div>
<div class="ln" style="top:66.40px;color:#c6c6c6">12</div>
<div class="cl" style="top:66.40px">        <span style="color:#9cdcfe">new_attrs</span> <span style="color:#d4d4d4">=</span> <span style="color:#d4d4d4">{}</span></div>
<div class="ln" style="top:92.80px;color:#858585">13</div>
<div class="cl" style="top:92.80px">        <span style="color:#c586c0">for</span> <span style="color:#9cdcfe">k</span><span style="color:#d4d4d4">,</span> <span style="color:#9cdcfe">v</span> <span style="color:#c586c0">in</span> <span style="color:#9cdcfe">attrs</span><span style="color:#d4d4d4">.</span><span style="color:#dcdcaa">items</span><span style="color:#d4d4d4">():</span></div>
<div class="ln" style="top:119.20px;color:#858585">14</div>
<div class="cl" style="top:119.20px">            <span style="color:#c586c0">if</span> <span style="color:#569cd6">not</span> <span style="color:#9cdcfe">k</span><span style="color:#d4d4d4">.</span><span style="color:#dcdcaa">startswith</span><span style="color:#d4d4d4">(</span><span style="color:#ce9178">'__'</span><span style="color:#d4d4d4">):</span></div>
<div class="ln" style="top:145.60px;color:#858585">15</div>
<div class="cl" style="top:145.60px">                <span style="color:#9cdcfe">key</span> <span style="color:#d4d4d4">=</span> <span style="color:#9cdcfe">k</span><span style="color:#d4d4d4">.</span><span style="color:#dcdcaa">upper</span><span style="color:#d4d4d4">()</span></div>
<div class="ln" style="top:172.00px;color:#858585">16</div>
<div class="cl" style="top:172.00px">                <span style="color:#dcdcaa">print</span><span style="color:#d4d4d4">(</span><span style="color:#ce9178">'modify</span> <span style="color:#ce9178">attr:</span> <span style="color:#569cd6">%s</span> <span style="color:#ce9178">-&gt;</span> <span style="color:#569cd6">%s</span><span style="color:#ce9178">'</span> <span style="color:#d4d4d4">%</span> <span style="color:#d4d4d4">(</span><span style="color:#9cdcfe">k</span><span style="color:#d4d4d4">,</span> <span style="color:#9cdcfe">key</span><span style="color:#d4d4d4">))</span></div>
<div class="ln" style="top:198.40px;color:#858585">17</div>
<div class="cl" style="top:198.40px">                <span style="color:#9cdcfe">new_attrs</span><span style="color:#d4d4d4">[</span><span style="color:#9cdcfe">key</span><span style="color:#d4d4d4">]</span> <span style="color:#d4d4d4">=</span> <span style="color:#9cdcfe">v</span></div>
<div class="ln" style="top:224.80px;color:#858585">18</div>
<div class="cl" style="top:224.80px">            <span style="color:#c586c0">else</span><span style="color:#d4d4d4">:</span></div>
<div class="ln" style="top:251.20px;color:#858585">19</div>
<div class="cl" style="top:251.20px">                <span style="color:#9cdcfe">new_attrs</span><span style="color:#d4d4d4">[</span><span style="color:#9cdcfe">k</span><span style="color:#d4d4d4">]</span> <span style="color:#d4d4d4">=</span> <span style="color:#9cdcfe">v</span></div>
<div class="ln" style="top:277.60px;color:#858585">20</div>
<div class="cl" style="top:277.60px">        <span style="color:#c586c0">return</span> <span style="color:#4ec9b0">type</span><span style="color:#d4d4d4">.</span><span style="color:#dcdcaa">__new__</span><span style="color:#d4d4d4">(</span><span style="color:#9cdcfe">cls</span><span style="color:#d4d4d4">,</span> <span style="color:#9cdcfe">cls_name</span><span style="color:#d4d4d4">,</span> <span style="color:#9cdcfe">bases</span><span style="color:#d4d4d4">,</span> <span style="color:#9cdcfe">new_attrs</span><span style="color:#d4d4d4">)</span></div>
<div class="ln" style="top:304.00px;color:#858585">21</div>
<div class="ln" style="top:330.40px;color:#858585">22</div>
<div class="cl" style="top:330.40px">    <span style="color:#569cd6">def</span> <span style="color:#dcdcaa">__call__</span><span style="color:#d4d4d4">(</span><span style="color:#9cdcfe">self</span><span style="color:#d4d4d4">,</span> <span style="color:#d4d4d4">*</span><span style="color:#9cdcfe">args</span><span style="color:#d4d4d4">,</span> <span style="color:#d4d4d4">**</span><span style="color:#9cdcfe">kwds</span><span style="color:#d4d4d4">)</span> <span style="color:#d4d4d4">-&gt;</span> <span style="color:#9cdcfe">Any</span><span style="color:#d4d4d4">:</span></div>
<div class="ln" style="top:356.80px;color:#858585">23</div>
<div class="cl" style="top:356.80px">        <span style="color:#9cdcfe">new_args</span> <span style="color:#d4d4d4">=</span> <span style="color:#d4d4d4">[</span><span style="color:#9cdcfe">x</span> <span style="color:#d4d4d4">*</span> <span style="color:#9cdcfe">x</span> <span style="color:#c586c0">for</span> <span style="color:#9cdcfe">x</span> <span style="color:#c586c0">in</span> <span style="color:#9cdcfe">args</span><span style="color:#d4d4d4">]</span></div>
<div class="ln" style="top:383.20px;color:#858585">24</div>
<div class="cl" style="top:383.20px">        <span style="color:#c586c0">return</span> <span style="color:#4ec9b0">super</span><span style="color:#d4d4d4">().</span><span style="color:#dcdcaa">__call__</span><span style="color:#d4d4d4">(</span><span style="color:#d4d4d4">*</span><span style="color:#9cdcfe">new_args</span><span style="color:#d4d4d4">,</span> <span style="color:#d4d4d4">**</span><span style="color:#9cdcfe">kwds</span><span style="color:#d4d4d4">)</span></div>
<div class="ln" style="top:409.60px;color:#858585">25</div>
<div class="ln" style="top:436.00px;color:#858585">26</div>
<div class="ln" style="top:462.40px;color:#858585">27</div>
<div class="cl" style="top:462.40px"><span style="color:#569cd6">class</span> <span style="color:#4ec9b0">D</span><span style="color:#d4d4d4">(</span><span style="color:#4ec9b0">object</span><span style="color:#d4d4d4">,</span> <span style="color:#9cdcfe">metaclass</span><span style="color:#d4d4d4">=</span><span style="color:#4ec9b0">MyMeta</span><span style="color:#d4d4d4">,</span> <span style="color:#9cdcfe">foo</span><span style="color:#d4d4d4">=</span><span style="color:#b5cea8">1</span><span style="color:#d4d4d4">,</span> <span style="color:#9cdcfe">bar</span><span style="color:#d4d4d4">=</span><span style="color:#b5cea8">2</span><span style="color:#d4d4d4">):</span></div>
<div class="ln" style="top:488.80px;color:#858585">28</div>
<div class="cl" style="top:488.80px">    <span style="color:#9cdcfe">aaa</span> <span style="color:#d4d4d4">=</span> <span style="color:#b5cea8">1</span></div>
<div class="ln" style="top:515.20px;color:#858585">29</div>
<div class="cl" style="top:515.20px">    <span style="color:#9cdcfe">bbb</span> <span style="color:#d4d4d4">=</span> <span style="color:#b5cea8">2</span></div>
</div>
<div class="r" style="left:459px;top:69px;width:928px;height:5px;background:linear-gradient(rgba(0,0,0,0.45),rgba(0,0,0,0));"></div>
<svg class="r" style="left:465px;top:141px;" width="17" height="17" viewBox="0 0 17 17"><path d="M2.2 2 H9.6 L14.5 8.2 L9.6 14.3 H2.2 Z" fill="none" stroke="#ffcc00" stroke-width="1.7" stroke-linejoin="round"/><circle cx="7.1" cy="8.3" r="2.5" fill="#e51400"/></svg>
<svg class="r" style="left:466px;top:460px;" width="13" height="13" viewBox="0 0 13 13"><circle cx="6.1" cy="6.3" r="4.9" fill="#e51400"/></svg>
<div class="r" style="left:459px;top:612px;width:928px;height:106px;background:#1e1e1e;"></div>
<div class="r" style="left:459px;top:612px;width:928px;height:1px;background:#404040;"></div>
<div class="t" style="left:486.00px;top:628.00px;font-size:13.8px;line-height:13.8px;color:#e7e7e7;font-family:'Liberation Sans', sans-serif;font-weight:400;letter-spacing:0.000px;transform:scaleX(0.8814);transform-origin:0 0;">TERMINAL</div>
<div class="r" style="left:483px;top:653px;width:68px;height:1px;background:#e7e7e7;"></div>
<div class="t" style="left:577.60px;top:628.00px;font-size:13.8px;line-height:13.8px;color:#979797;font-family:'Liberation Sans', sans-serif;font-weight:400;letter-spacing:0.000px;transform:scaleX(0.8658);transform-origin:0 0;">PROBLEMS</div>
<div class="t" style="left:673.50px;top:628.00px;font-size:13.8px;line-height:13.8px;color:#979797;font-family:'Liberation Sans', sans-serif;font-weight:400;letter-spacing:0.000px;transform:scaleX(0.8814);transform-origin:0 0;">OUTPUT</div>
<div class="t" style="left:752.80px;top:628.00px;font-size:13.8px;line-height:13.8px;color:#979797;font-family:'Liberation Sans', sans-serif;font-weight:400;letter-spacing:0.000px;transform:scaleX(0.8788);transform-origin:0 0;">DEBUG CONSOLE</div>
<div class="t" style="left:483.50px;top:680.00px;font-size:15.0px;line-height:15.0px;color:#cccccc;font-family:'Liberation Mono', monospace;font-weight:400;letter-spacing:0.000px;">modify attr: aaa -&gt; AAA</div>
<div class="t" style="left:483.50px;top:699.00px;font-size:15.0px;line-height:15.0px;color:#cccccc;font-family:'Liberation Mono', monospace;font-weight:400;letter-spacing:0.000px;">modify attr: bbb -&gt; BBB</div>
<div class="r" style="left:0px;top:0px;width:1387px;height:1px;background:#ffffff;"></div>
<div class="r" style="left:0px;top:1px;width:1387px;height:1px;background:#1a1a1a;"></div>
</div></body></html>
